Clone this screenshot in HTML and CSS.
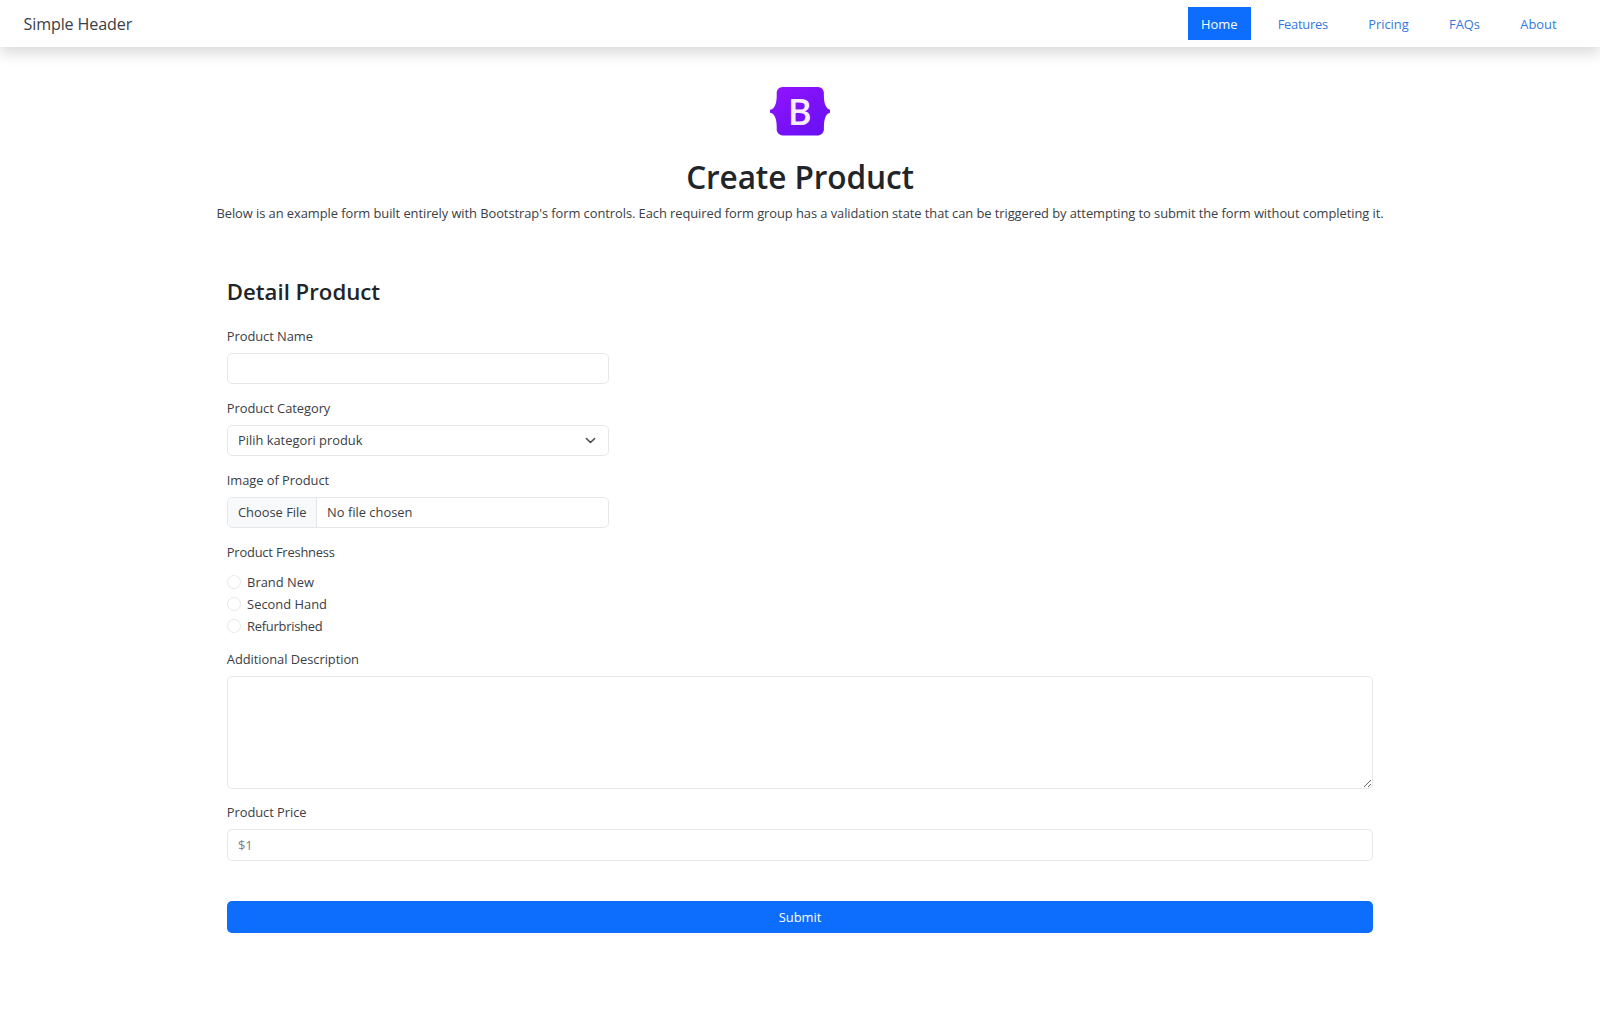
FILE: index.html
```html
<!DOCTYPE html>
<html lang="en">
<head>
<meta charset="utf-8">
<title>Create Product</title>
<link rel="stylesheet" href="styles.css">
</head>
<body>
<header class="site-header">
  <a class="brand">Simple Header</a>
  <nav class="nav">
    <a class="nav-link active">Home</a>
    <a class="nav-link tight">Features</a>
    <a class="nav-link">Pricing</a>
    <a class="nav-link">FAQs</a>
    <a class="nav-link">About</a>
  </nav>
</header>
<main class="container">
  <section class="intro">
    <svg class="logo" viewBox="0 0 118 94" role="img" aria-label="Bootstrap">
      <defs>
        <linearGradient id="purple" x1="0.1" y1="0" x2="0.9" y2="1">
          <stop offset="0" stop-color="#9013fe"/>
          <stop offset="1" stop-color="#6610f2"/>
        </linearGradient>
      </defs>
      <path fill="url(#purple)" d="M24.509 0c-6.733 0-11.715 5.893-11.492 12.284.214 6.14-.064 14.092-2.066 20.577C8.943 39.365 5.547 43.485 0 44.014v5.972c5.547.529 8.943 4.649 10.951 11.153 2.002 6.485 2.28 14.437 2.066 20.577C12.794 88.106 17.776 94 24.51 94H93.5c6.733 0 11.714-5.893 11.491-12.284-.214-6.14.064-14.092 2.066-20.577 2.009-6.504 5.396-10.624 10.943-11.153v-5.972c-5.547-.529-8.934-4.649-10.943-11.153-2.002-6.484-2.28-14.437-2.066-20.577C105.214 5.894 100.233 0 93.5 0H24.508z"/>
      <text class="logo-letter" x="58" y="73" text-anchor="middle">B</text>
    </svg>
    <h1>Create Product</h1>
    <p>Below is an example form built entirely with Bootstrap's form controls. Each required form group has a validation state that can be triggered by attempting to submit the form without completing it.</p>
  </section>
  <form class="product-form">
    <h2>Detail Product</h2>
    <div class="field half">
      <label for="name">Product Name</label>
      <input class="control" id="name" type="text">
    </div>
    <div class="field half">
      <label>Product Category</label>
      <div class="control select" role="combobox" tabindex="0"><span>Pilih kategori produk</span>
        <svg class="chevron" viewBox="0 0 16 16"><path d="m2 5 6 6 6-6"/></svg>
      </div>
    </div>
    <div class="field half">
      <label>Image of Product</label>
      <div class="control file"><span class="file-button">Choose File</span><span>No file chosen</span></div>
    </div>
    <div class="field freshness">
      <label>Product Freshness</label>
      <div class="check"><input type="radio" name="fresh" id="fresh-new"><label for="fresh-new">Brand New</label></div>
      <div class="check"><input type="radio" name="fresh" id="fresh-second"><label for="fresh-second">Second Hand</label></div>
      <div class="check"><input type="radio" name="fresh" id="fresh-refurb"><label class="tight" for="fresh-refurb">Refurbrished</label></div>
    </div>
    <div class="field">
      <label for="desc">Additional Description</label>
      <textarea class="control area" id="desc"></textarea>
    </div>
    <div class="field">
      <label for="price">Product Price</label>
      <input class="control" id="price" type="text" placeholder="$1">
    </div>
    <button class="submit" type="button">Submit</button>
  </form>
</main>
</body>
</html>
```
FILE: styles.css
```css
* { box-sizing: border-box; }

html { font-size: 13.474px; }

body {
  margin: 0;
  background: #fff;
  color: #3a4045;
  font-family: "Segoe UI", "Open Sans", "Noto Sans", sans-serif;
  font-size: 12.9px;
  line-height: 20.2px;
}

.site-header {
  display: flex;
  align-items: center;
  justify-content: space-between;
  height: 47px;
  padding: 0 30px 0 23.5px;
  box-shadow: 0 .5rem 1rem rgba(0, 0, 0, .15);
}

.brand {
  padding-top: 1px;
  font-size: 16.1px;
  letter-spacing: -.12px;
}

.nav { display: flex; gap: 13.3px; }

.nav-link {
  padding: 7.2px 1rem 6.2px;
  color: #3577e2;
}

.tight { letter-spacing: -.25px; }

.nav-link.active { background: #0d6efd; color: #fff; }

.container { width: 1167px; margin: 0 auto; }

.intro {
  display: flex;
  flex-direction: column;
  align-items: center;
  padding-top: 40px;
}

.logo { width: 60.6px; height: 48.5px; }

.logo-letter {
  fill: #f8ecff;
  font-size: 71px;
  font-weight: 600;
}

h1, h2, p { margin: 0; }

h1, h2 { color: #212529; font-weight: 600; }

h1 {
  margin: 21.2px 0 5.9px;
  font-size: 31.6px;
  letter-spacing: -.12px;
  line-height: 40.4px;
}

p {
  letter-spacing: -.06px;
  white-space: nowrap;
}

.product-form { padding: 0 10.3px; }

h2 {
  margin: 54.5px 0 19.6px;
  font-size: 22.2px;
  line-height: 28.3px;
}

.field { margin-bottom: 1rem; }

.field.half { width: 382px; }

.field > label {
  display: block;
  margin-bottom: .5rem;
  letter-spacing: -.05px;
}

.control {
  display: flex;
  align-items: center;
  width: 100%;
  height: 31.7px;
  padding: 0 .75rem;
  border: 1px solid #e5e8ea;
  border-radius: 5px;
  background: #fff;
  color: inherit;
  font: inherit;
}

.control::placeholder { color: #7b8187; opacity: 1; }

.select { justify-content: space-between; }

.chevron {
  width: 11px;
  height: 11px;
  margin-right: 1.5px;
  fill: none;
  stroke: #454b50;
  stroke-width: 2.2;
  stroke-linecap: round;
  stroke-linejoin: round;
}

.file { padding-left: 0; gap: .75rem; overflow: hidden; }

.file-button {
  display: flex;
  align-items: center;
  align-self: stretch;
  padding: 0 .7rem 0 .75rem;
  border-right: 1px solid #e3e6e9;
  background: #f8f9fa;
}

.field.freshness > label { margin-bottom: 9.9px; letter-spacing: -.2px; }

.check {
  display: flex;
  align-items: center;
  gap: 6.3px;
}

.check + .check { margin-top: 1.6px; }

.check input {
  appearance: none;
  width: 14px;
  height: 14px;
  margin: 0;
  border: 1px solid #e5e8ea;
  border-radius: 50%;
}

.area { display: block; height: 112.5px; }

.submit {
  display: block;
  width: 100%;
  height: 32px;
  margin-top: 3rem;
  border: 0;
  border-radius: 5px;
  background: #0d6efd;
  color: #fff;
  font: inherit;
}
```
